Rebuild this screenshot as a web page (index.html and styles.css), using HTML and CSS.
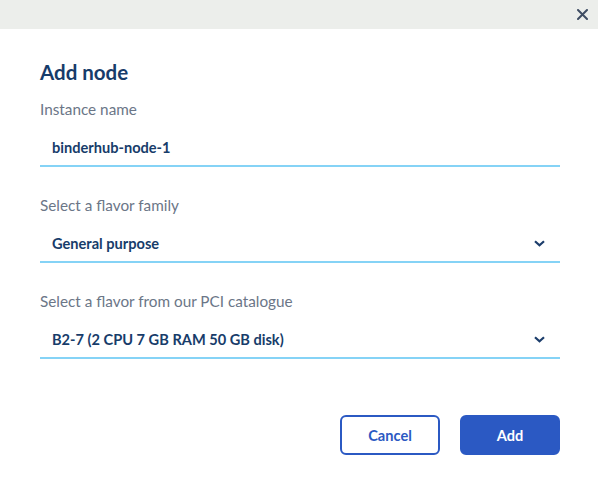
FILE: index.html
```html
<!DOCTYPE html>
<html>
<head>
<meta charset="utf-8">
<link rel="stylesheet" href="styles.css">
</head>
<body>
<div class="modal">
  <div class="modal-header">
    <button class="close" aria-label="Close">
      <svg width="11" height="11" viewBox="0 0 11 11"><path d="M1 1L10 10M10 1L1 10" stroke="#3f4d63" stroke-width="2" stroke-linecap="round"/></svg>
    </button>
  </div>
  <div class="modal-body">
    <h2 class="title">Add node</h2>
    <div class="field">
      <label class="label">Instance name</label>
      <div class="control"><span class="value">binderhub-node-1</span></div>
    </div>
    <div class="field">
      <label class="label">Select a flavor family</label>
      <div class="control"><span class="value">General purpose</span>
        <svg class="chev" width="11" height="7" viewBox="0 0 11 7"><path d="M1 1.2L5.5 5.3L10 1.2" fill="none" stroke="#1c3d6b" stroke-width="2.2"/></svg>
      </div>
    </div>
    <div class="field">
      <label class="label">Select a flavor from our PCI catalogue</label>
      <div class="control"><span class="value">B2-7 (2 CPU 7 GB RAM 50 GB disk)</span>
        <svg class="chev" width="11" height="7" viewBox="0 0 11 7"><path d="M1 1.2L5.5 5.3L10 1.2" fill="none" stroke="#1c3d6b" stroke-width="2.2"/></svg>
      </div>
    </div>
    <div class="actions">
      <button class="btn btn-outline">Cancel</button>
      <button class="btn btn-primary">Add</button>
    </div>
  </div>
</div>
</body>
</html>
```
FILE: styles.css
```css
* { box-sizing: border-box; }
html, body { margin: 0; padding: 0; background: #fff; }
body { font-family: Lato, "Liberation Sans", sans-serif; }
.modal { width: 598px; height: 483px; background: #fff; }
.modal-header {
  height: 29px;
  background: #eceeeb;
  display: flex;
  justify-content: flex-end;
  align-items: center;
  padding-right: 10px;
}
.close {
  border: 0; background: none; padding: 0; margin: 0;
  width: 11px; height: 11px; display: flex;
}
.modal-body { padding: 31px 38px 0 40px; }
.title {
  margin: 0;
  font-size: 20.5px;
  font-weight: 700;
  color: #173c6a;
  line-height: 24px;
}
.field { margin-top: 15px; }
.field + .field { margin-top: 28px; }
.label {
  display: block;
  font-size: 15.3px;
  color: #6b7687;
  line-height: 20px;
}
.control {
  margin-top: 10px;
  height: 38px;
  border-bottom: 2px solid #85d3f6;
  display: flex;
  align-items: center;
  justify-content: space-between;
  padding: 0 15px 0 12px;
}
.value {
  font-size: 14.6px;
  font-weight: 700;
  color: #173c6a;
}
.actions {
  display: flex;
  justify-content: flex-end;
  gap: 20px;
  margin-top: 56px;
}
.btn {
  width: 100px;
  height: 40px;
  border-radius: 6px;
  font-family: inherit;
  font-size: 14.6px;
  font-weight: 700;
  cursor: pointer;
}
.btn-outline { background: #fff; border: 2px solid #2b59c3; color: #2b59c3; }
.btn-primary { background: #2b59c3; border: 2px solid #2b59c3; color: #fff; }
```
